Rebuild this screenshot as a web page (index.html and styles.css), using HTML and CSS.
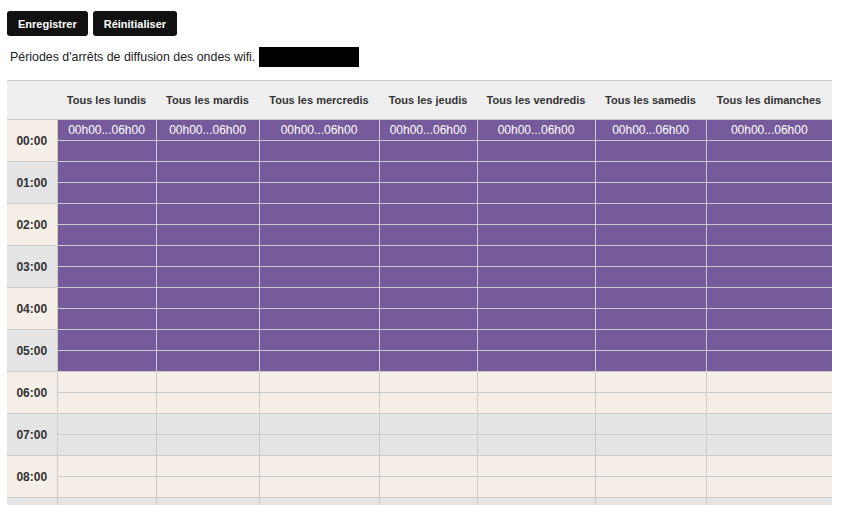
FILE: index.html
```html
<!DOCTYPE html>
<html lang="fr">
<head>
<meta charset="utf-8">
<title>Wifi</title>
<link rel="stylesheet" href="styles.css">
</head>
<body>
<div class="actions">
  <button class="btn">Enregistrer</button>
  <button class="btn">Réinitialiser</button>
</div>
<p class="intro">Périodes d'arrêts de diffusion des ondes wifi. <span class="mask"></span></p>
<table class="planning">
  <colgroup>
    <col class="c-time"><col class="c-lun"><col class="c-mar"><col class="c-mer"><col class="c-jeu"><col class="c-ven"><col class="c-sam"><col class="c-dim">
  </colgroup>
  <thead>
    <tr><th></th><th>Tous les lundis</th><th>Tous les mardis</th><th>Tous les mercredis</th><th>Tous les jeudis</th><th>Tous les vendredis</th><th>Tous les samedis</th><th>Tous les dimanches</th></tr>
  </thead>
  <tbody>
    <tr class="even"><td class="time" rowspan="2">00:00</td><td class="on">00h00...06h00</td><td class="on">00h00...06h00</td><td class="on">00h00...06h00</td><td class="on">00h00...06h00</td><td class="on">00h00...06h00</td><td class="on">00h00...06h00</td><td class="on">00h00...06h00</td></tr>
    <tr class="even"><td class="on"></td><td class="on"></td><td class="on"></td><td class="on"></td><td class="on"></td><td class="on"></td><td class="on"></td></tr>
    <tr class="odd"><td class="time" rowspan="2">01:00</td><td class="on"></td><td class="on"></td><td class="on"></td><td class="on"></td><td class="on"></td><td class="on"></td><td class="on"></td></tr>
    <tr class="odd"><td class="on"></td><td class="on"></td><td class="on"></td><td class="on"></td><td class="on"></td><td class="on"></td><td class="on"></td></tr>
    <tr class="even"><td class="time" rowspan="2">02:00</td><td class="on"></td><td class="on"></td><td class="on"></td><td class="on"></td><td class="on"></td><td class="on"></td><td class="on"></td></tr>
    <tr class="even"><td class="on"></td><td class="on"></td><td class="on"></td><td class="on"></td><td class="on"></td><td class="on"></td><td class="on"></td></tr>
    <tr class="odd"><td class="time" rowspan="2">03:00</td><td class="on"></td><td class="on"></td><td class="on"></td><td class="on"></td><td class="on"></td><td class="on"></td><td class="on"></td></tr>
    <tr class="odd"><td class="on"></td><td class="on"></td><td class="on"></td><td class="on"></td><td class="on"></td><td class="on"></td><td class="on"></td></tr>
    <tr class="even"><td class="time" rowspan="2">04:00</td><td class="on"></td><td class="on"></td><td class="on"></td><td class="on"></td><td class="on"></td><td class="on"></td><td class="on"></td></tr>
    <tr class="even"><td class="on"></td><td class="on"></td><td class="on"></td><td class="on"></td><td class="on"></td><td class="on"></td><td class="on"></td></tr>
    <tr class="odd"><td class="time" rowspan="2">05:00</td><td class="on"></td><td class="on"></td><td class="on"></td><td class="on"></td><td class="on"></td><td class="on"></td><td class="on"></td></tr>
    <tr class="odd"><td class="on"></td><td class="on"></td><td class="on"></td><td class="on"></td><td class="on"></td><td class="on"></td><td class="on"></td></tr>
    <tr class="even"><td class="time" rowspan="2">06:00</td><td></td><td></td><td></td><td></td><td></td><td></td><td></td></tr>
    <tr class="even"><td></td><td></td><td></td><td></td><td></td><td></td><td></td></tr>
    <tr class="odd"><td class="time" rowspan="2">07:00</td><td></td><td></td><td></td><td></td><td></td><td></td><td></td></tr>
    <tr class="odd"><td></td><td></td><td></td><td></td><td></td><td></td><td></td></tr>
    <tr class="even"><td class="time" rowspan="2">08:00</td><td></td><td></td><td></td><td></td><td></td><td></td><td></td></tr>
    <tr class="even"><td></td><td></td><td></td><td></td><td></td><td></td><td></td></tr>
    <tr class="odd"><td class="time" rowspan="2">09:00</td><td></td><td></td><td></td><td></td><td></td><td></td><td></td></tr>
    <tr class="odd"><td></td><td></td><td></td><td></td><td></td><td></td><td></td></tr>
    <tr class="even"><td class="time" rowspan="2">10:00</td><td></td><td></td><td></td><td></td><td></td><td></td><td></td></tr>
    <tr class="even"><td></td><td></td><td></td><td></td><td></td><td></td><td></td></tr>
    <tr class="odd"><td class="time" rowspan="2">11:00</td><td></td><td></td><td></td><td></td><td></td><td></td><td></td></tr>
    <tr class="odd"><td></td><td></td><td></td><td></td><td></td><td></td><td></td></tr>
  </tbody>
</table>
</body>
</html>
```
FILE: styles.css
```css
html, body {
  margin: 0;
  background: #fff;
}
body {
  padding: 11px 7px 0;
  font-family: "Liberation Sans", Arial, sans-serif;
  color: #222;
}
.actions {
  display: flex;
  gap: 5px;
}
.btn {
  background: #111;
  color: #fff;
  border: 0;
  border-radius: 3px;
  height: 25px;
  padding: 0 11px;
  font-family: "Liberation Sans", Arial, sans-serif;
  font-weight: bold;
  font-size: 11px;
  cursor: pointer;
}
.intro {
  margin: 11px 0 0 3px;
  font-size: 12.4px;
  line-height: 20px;
  height: 20px;
  display: flex;
  align-items: center;
  gap: 4px;
}
.mask {
  display: inline-block;
  width: 100px;
  height: 20px;
  background: #000;
}
.planning {
  margin-top: 13px;
  border-collapse: collapse;
  table-layout: fixed;
  width: 825px;
}
.c-time { width: 50px; }
.c-lun { width: 99px; }
.c-mar { width: 103px; }
.c-mer { width: 120px; }
.c-jeu { width: 98px; }
.c-ven { width: 118px; }
.c-sam { width: 111px; }
.c-dim { width: 126px; }
.planning th {
  height: 38px;
  padding: 0;
  background: #efefef;
  border-top: 1px solid #cccccc;
  color: #333;
  font-size: 11px;
  font-weight: bold;
  text-align: center;
  white-space: nowrap;
}
.planning td {
  height: 20px;
  padding: 0;
  border: 1px solid #cbcbcb;
  font-size: 12px;
  text-align: center;
  line-height: 18px;
}
.planning tr.even td { background: #f5eee7; }
.planning tr.odd td { background: #e4e4e4; }
.planning td.time {
  color: #333;
  font-weight: bold;
  font-size: 12px;
  border-left: 0;
}
.planning tr td.on {
  background: #765b9c;
  color: #fff;
  vertical-align: middle;
}
.planning td:last-child { border-right: 0; }
```
